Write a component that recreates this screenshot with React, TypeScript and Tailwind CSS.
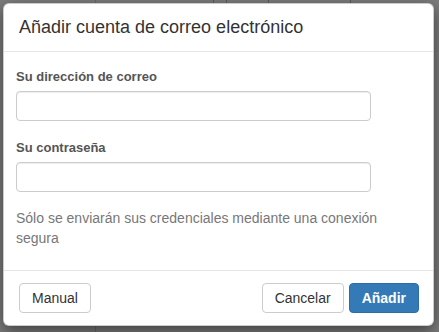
const font = "font-['Liberation_Sans',Arial,sans-serif]";

const Field = ({ label, type }: { label: string; type: string }) => (
  <div className="flex flex-col">
    <label className="text-[13px] leading-[18px] font-bold text-[#555]">{label}</label>
    <input
      type={type}
      className="mt-[5px] h-[30px] w-[355px] rounded-[4px] border border-[#ccc] bg-white px-3 text-[14px] text-[#555] shadow-[inset_0_1px_1px_rgba(0,0,0,0.075)] outline-none"
    />
  </div>
);

const Button = ({ children, primary = false }: { children: string; primary?: boolean }) => (
  <button
    className={
      primary
        ? "h-[30px] rounded-[4px] border border-[#2e6da4] bg-[#337ab7] px-3 text-[14px] leading-[18px] font-bold text-white"
        : "h-[30px] rounded-[4px] border border-[#ccc] bg-white px-3 text-[14px] leading-[18px] text-[#333]"
    }
  >
    {children}
  </button>
);

export default function App() {
  return (
    <div className={`relative h-[332px] w-[439px] overflow-hidden bg-[#7c7c7c] p-[3px] ${font}`}>
      <div className="absolute top-0 bottom-0 left-[95px] w-px bg-[#6a6a6a]" />
      <div className="absolute top-0 left-[213px] h-[3px] w-px bg-[#5a5a5a]" />
      <div className="absolute top-0 left-[226px] h-[3px] w-px bg-[#5a5a5a]" />
      <div className="absolute top-0 left-[268px] h-[3px] w-px bg-[#5a5a5a]" />
      <div className="absolute top-0 left-[350px] h-[3px] w-px bg-[#5a5a5a]" />
      <div className="relative w-[431px] rounded-[6px] border border-black/20 bg-white shadow-[0_5px_15px_rgba(0,0,0,0.5)]">
        <div className="border-b border-[#e5e5e5] px-[15px] pt-[13px] pb-[14px]">
          <h4 className="text-[18px] leading-[20px] font-normal text-[#333]">
            Añadir cuenta de correo electrónico
          </h4>
        </div>
        <div className="flex flex-col px-[12px] pt-[16px] pb-[22px]">
          <Field label="Su dirección de correo" type="email" />
          <div className="mt-[18px]">
            <Field label="Su contraseña" type="password" />
          </div>
          <p className="mt-[16px] w-[385px] text-[14px] leading-[20px] text-[#777]">
            Sólo se enviarán sus credenciales mediante una conexión segura
          </p>
        </div>
        <div className="flex items-center border-t border-[#e5e5e5] pt-[12px] pr-[14px] pb-[12px] pl-[15px]">
          <Button>Manual</Button>
          <div className="ml-auto flex gap-[5px]">
            <Button>Cancelar</Button>
            <Button primary>Añadir</Button>
          </div>
        </div>
      </div>
    </div>
  );
}
